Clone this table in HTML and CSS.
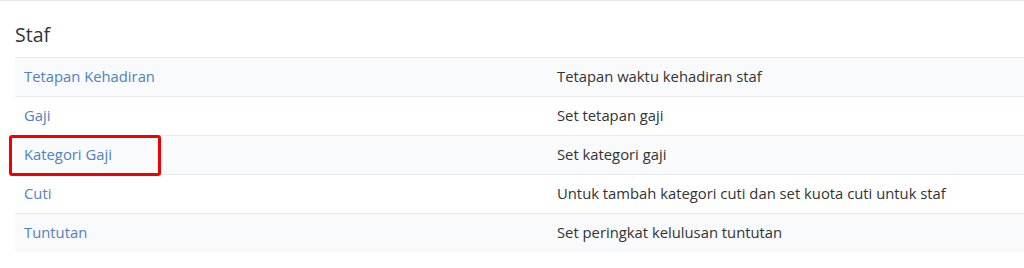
FILE: index.html
```html
<!DOCTYPE html>
<html lang="ms">
<head>
<meta charset="utf-8">
<title>Staf</title>
<link rel="stylesheet" href="styles.css">
</head>
<body>
<div class="topline"></div>
<section class="panel">
  <h2 class="title">Staf</h2>
  <table class="settings">
    <tbody>
      <tr><td class="name"><a href="#">Tetapan Kehadiran</a></td><td class="desc">Tetapan waktu kehadiran staf</td></tr>
      <tr><td class="name"><a href="#">Gaji</a></td><td class="desc">Set tetapan gaji</td></tr>
      <tr><td class="name marked"><a href="#">Kategori Gaji</a><span class="highlight"></span></td><td class="desc">Set kategori gaji</td></tr>
      <tr><td class="name"><a href="#">Cuti</a></td><td class="desc">Untuk tambah kategori cuti dan set kuota cuti untuk staf</td></tr>
      <tr><td class="name"><a href="#">Tuntutan</a></td><td class="desc">Set peringkat kelulusan tuntutan</td></tr>
    </tbody>
  </table>
</section>
</body>
</html>
```

FILE: styles.css
```css
html, body {
  margin: 0;
  padding: 0;
  background: #ffffff;
  font-family: "Open Sans", "Noto Sans", sans-serif;
  color: #333333;
}
.topline {
  height: 1px;
  background: #e6e6e6;
}
.panel {
  padding-left: 15px;
}
.title {
  margin: 22px 0 10px 0;
  font-size: 19.5px;
  line-height: 24px;
  font-weight: 400;
  color: #333333;
}
.settings {
  width: 100%;
  border-collapse: collapse;
  font-size: 14.8px;
}
.settings td {
  border-top: 1px solid #e8ecf1;
  padding: 7px 9px 9px 9px;
  line-height: 22px;
  vertical-align: top;
}
.settings tr:nth-child(odd) td {
  background: #f9fafc;
}
.settings td.name {
  width: 516px;
}
.settings td.desc {
  padding-left: 8px;
}
.settings a {
  color: #4f82c2;
  text-decoration: none;
}
.marked {
  position: relative;
}
.highlight {
  position: absolute;
  left: -6px;
  top: -1px;
  width: 146px;
  height: 35px;
  border: 3px solid #f00000;
  border-radius: 3px;
}
```
